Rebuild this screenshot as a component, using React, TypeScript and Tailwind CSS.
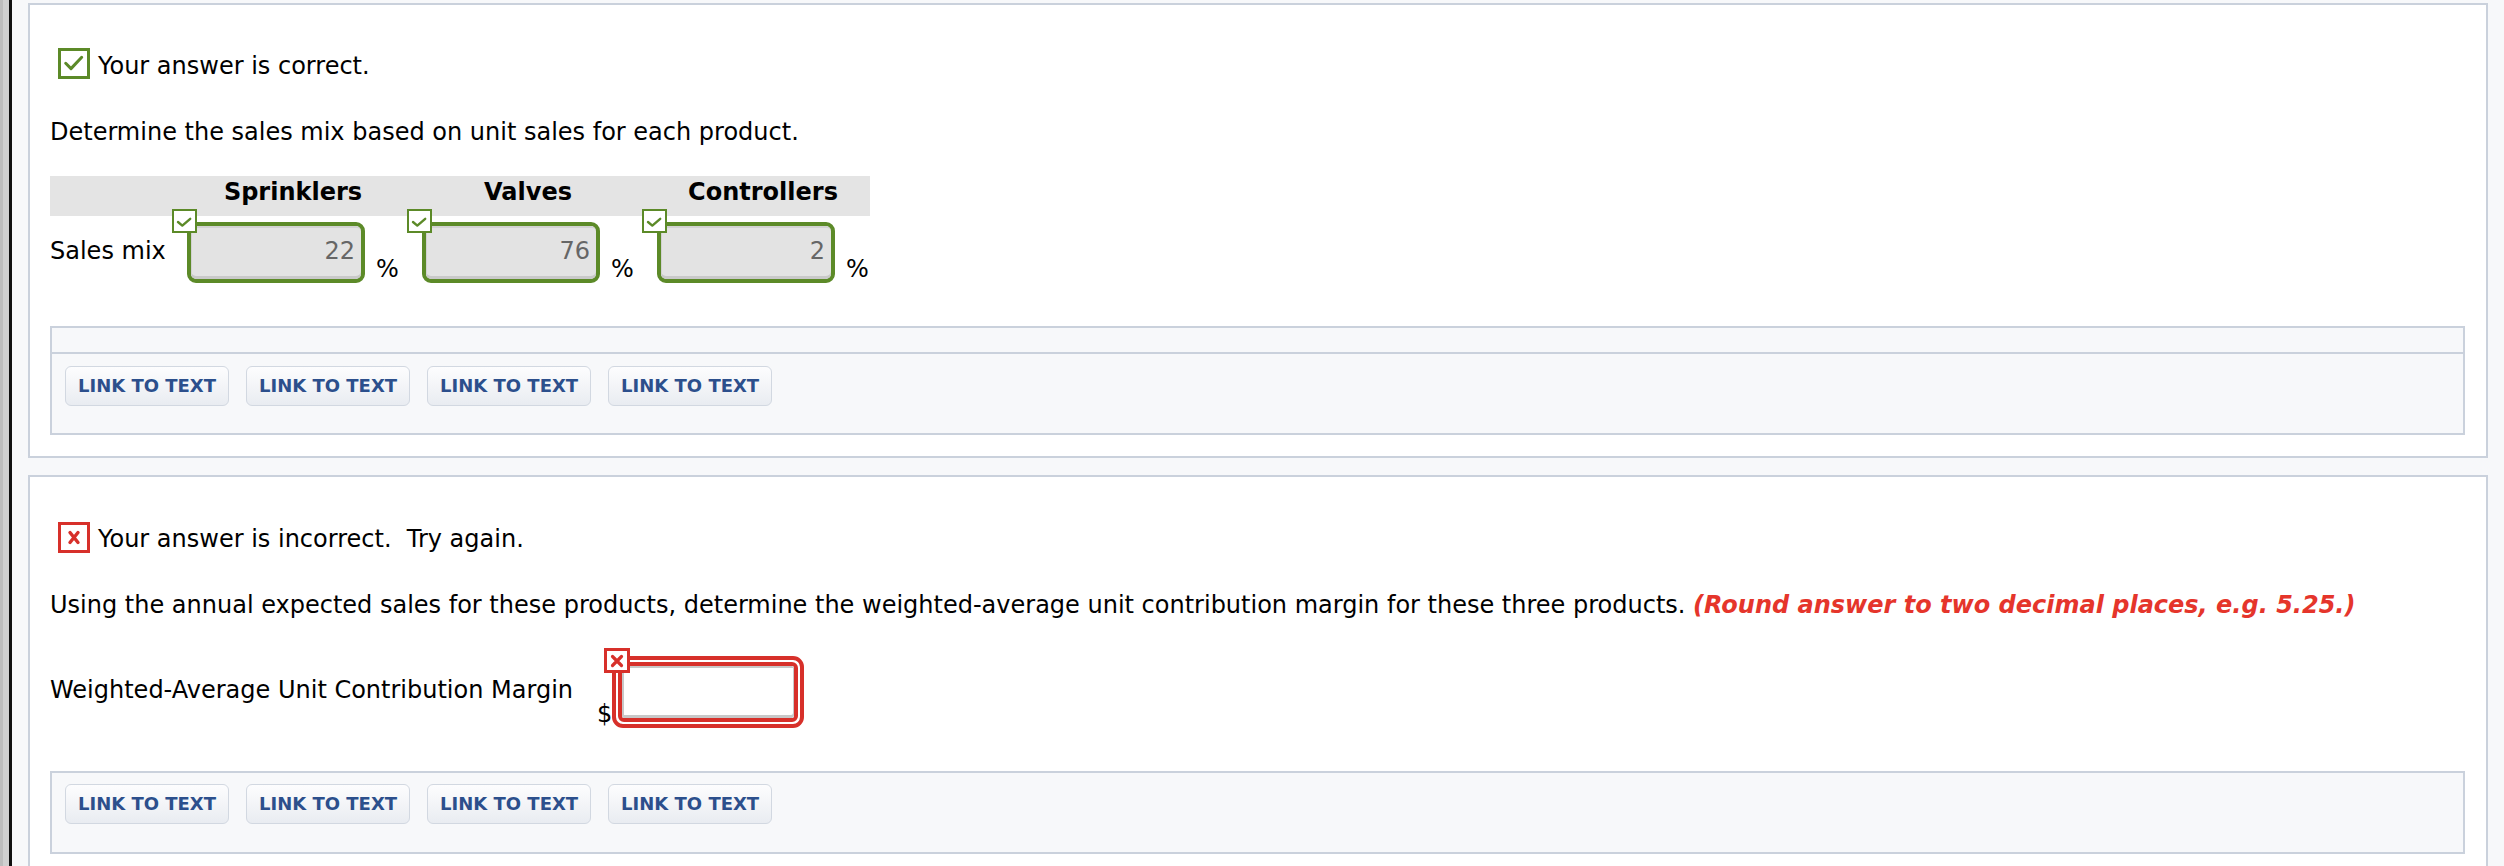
import React from "react";

const GREEN = "#5c8a28";
const RED = "#d7302a";

function BigCheck() {
  return (
    <div className="w-[32px] h-[31px] border-[3px] border-[#5c8a28] bg-white shrink-0">
      <svg width="26" height="25" viewBox="0 0 26 25" className="block">
        <path d="M4.7 12.3 L10 17.6 L20.7 6.3" fill="none" stroke={GREEN} strokeWidth="3" strokeLinecap="round" strokeLinejoin="round" />
      </svg>
    </div>
  );
}

function BigX() {
  return (
    <div className="w-[32px] h-[31px] border-[3px] border-[#d7302a] bg-white shrink-0">
      <svg width="26" height="25" viewBox="0 0 26 25" className="block">
        <path d="M9 7.5 L17 17.5 M17 7.5 L9 17.5" fill="none" stroke={RED} strokeWidth="3.4" strokeLinecap="round" />
      </svg>
    </div>
  );
}

function SmallCheck() {
  return (
    <div className="absolute left-[-15px] top-[-13px] w-[25px] h-[24px] border-[2px] border-[#5c8a28] bg-white z-10">
      <svg width="21" height="20" viewBox="0 0 21 20" className="block">
        <path d="M4 11 L8.3 14.6 L16.2 7.8" fill="none" stroke={GREEN} strokeWidth="2.4" strokeLinecap="round" strokeLinejoin="round" />
      </svg>
    </div>
  );
}

function SmallX() {
  return (
    <div className="absolute left-[-8px] top-[-8px] w-[26px] h-[25px] border-[3px] border-[#d7302a] bg-white z-10">
      <svg width="20" height="19" viewBox="0 0 20 19" className="block">
        <path d="M5.5 5.5 L14.5 14.5 M14.5 5.5 L5.5 14.5" fill="none" stroke={RED} strokeWidth="3.2" strokeLinecap="round" />
      </svg>
    </div>
  );
}

function GreenInput({ value }: { value: string }) {
  return (
    <div className="relative">
      <SmallCheck />
      <div className="w-[178px] h-[61px] rounded-[9px] border-[4px] border-[#5c8a28] bg-[#e3e3e3] overflow-hidden">
        <div className="w-full h-full rounded-[5px] shadow-[inset_1px_2px_0_#d2d2d2,inset_0_-3px_0_#c9c9c9] flex justify-end pt-[11px] pr-[6px] text-[24px] leading-[28px] text-[#666666]">
          {value}
        </div>
      </div>
    </div>
  );
}

function LinkButtons() {
  return (
    <div className="flex gap-[17px]">
      {[0, 1, 2, 3].map((i) => (
        <div
          key={i}
          className="h-[40px] px-[12px] flex items-center border border-[#d2d8e1] rounded-[6px] bg-gradient-to-b from-[#fdfdfe] to-[#e9ecf1] text-[18px] leading-[22px] font-bold text-[#2c4f8c] whitespace-nowrap"
        >
          LINK TO TEXT
        </div>
      ))}
    </div>
  );
}

export default function App() {
  return (
    <div className="h-screen w-full overflow-hidden flex bg-[#f7f8fa] font-['DejaVu_Sans',Verdana,sans-serif] text-black">
      <div className="w-[3px] bg-[#bdbdbd] shrink-0" />
      <div className="w-[6px] bg-[#d0d0d0] shrink-0" />
      <div className="w-[3px] bg-[#111111] shrink-0" />
      <div className="flex-1 pl-[16px] pr-[16px] pt-[3px] flex flex-col gap-[17px]">
        {/* Card 1 */}
        <div className="border-[2px] border-[#cad1dc] bg-white pt-[43px] pl-[20px] pr-[21px] pb-[21px] shrink-0">
          <div className="h-[31px] ml-[8px] flex items-start gap-[8px] overflow-visible">
            <BigCheck />
            <div className="mt-[4px] text-[24px] leading-[28px] whitespace-nowrap">Your answer is correct.</div>
          </div>
          <div className="mt-[39px] text-[24px] leading-[28px]">
            Determine the sales mix based on unit sales for each product.
          </div>
          <div className="mt-[30px] w-[820px] h-[40px] bg-[#e4e4e4] flex pt-[2px] text-[24px] leading-[28px] font-bold">
            <div className="w-[137px] shrink-0" />
            <div className="w-[212px] text-center">Sprinklers</div>
            <div className="w-[212px] ml-[23px] text-center">Valves</div>
            <div className="w-[212px] ml-[23px] text-center">Controllers</div>
          </div>
          <div className="mt-[6px] h-[61px] flex items-start text-[24px] leading-[28px]">
            <div className="w-[137px] shrink-0 mt-[15px]">Sales mix</div>
            {[
              ["22", ""],
              ["76", "ml-[23px]"],
              ["2", "ml-[23px]"],
            ].map(([v, cls]) => (
              <div key={v} className={`w-[212px] flex items-start ${cls}`}>
                <GreenInput value={v} />
                <div className="ml-[11px] mt-[33px]">%</div>
              </div>
            ))}
          </div>
          <div className="mt-[43px] border-[2px] border-[#cad1dc] bg-[#f7f8fa]">
            <div className="h-[24px] border-b-[2px] border-[#cad1dc] box-content" />
            <div className="pt-[12px] pb-[27px] pl-[13px]">
              <LinkButtons />
            </div>
          </div>
        </div>

        {/* Card 2 */}
        <div className="border-[2px] border-[#cad1dc] bg-white pt-[45px] pl-[20px] pr-[21px] pb-[21px] shrink-0">
          <div className="h-[31px] ml-[8px] flex items-start gap-[8px]">
            <BigX />
            <div className="mt-[3px] text-[24px] leading-[28px] whitespace-pre">Your answer is incorrect.  Try again.</div>
          </div>
          <div className="mt-[38px] text-[24px] leading-[28px] whitespace-nowrap">
            Using the annual expected sales for these products, determine the weighted-average unit contribution margin for these three products.{" "}
            <span className="font-bold italic text-[#e5352b]">(Round answer to two decimal places, e.g. 5.25.)</span>
          </div>
          <div className="mt-[37px] h-[72px] flex items-start text-[24px] leading-[28px]">
            <div className="w-[547px] shrink-0 mt-[20px] whitespace-nowrap">Weighted-Average Unit Contribution Margin</div>
            <div className="mt-[44px]">$</div>
            <div className="relative">
              <SmallX />
              <div className="w-[192px] h-[72px] rounded-[11px] border-[4px] border-[#d7302a] bg-white p-[2px]">
                <div className="w-full h-full rounded-[6px] border-[4px] border-[#d7302a] overflow-hidden">
                  <div className="w-full h-full bg-white rounded-[2px] shadow-[inset_2px_2px_0_#c8c8c8,inset_-1px_-3px_0_#c8c8c8]" />
                </div>
              </div>
            </div>
          </div>
          <div className="mt-[43px] border-[2px] border-[#cad1dc] bg-[#f7f8fa] pt-[11px] pb-[28px] pl-[13px]">
            <LinkButtons />
          </div>
        </div>
      </div>
    </div>
  );
}
